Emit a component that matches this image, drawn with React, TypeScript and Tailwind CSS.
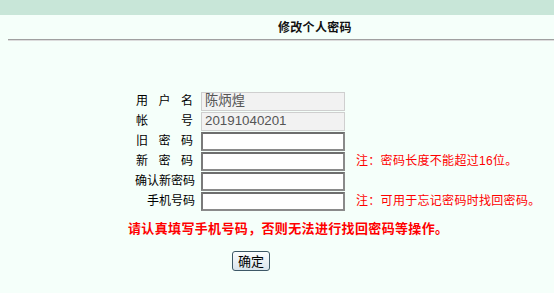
const cjk = "font-['Liberation_Sans','Noto_Sans_CJK_SC',sans-serif]";

const Spaced = ({ chars, w }: { chars: string[]; w: number }) => (
  <span className="inline-flex justify-between mr-[2px]" style={{ width: w }}>
    {chars.map((c, i) => (
      <span key={i}>{c}</span>
    ))}
  </span>
);

const rows: {
  label: React.ReactNode;
  value?: string;
  readOnly?: boolean;
  note?: string;
}[] = [
  { label: <Spaced chars={["用", "户", "名"]} w={57} />, value: "陈炳煌", readOnly: true },
  { label: <Spaced chars={["帐", "号"]} w={57} />, value: "20191040201", readOnly: true },
  { label: <Spaced chars={["旧", "密", "码"]} w={57} /> },
  { label: <Spaced chars={["新", "密", "码"]} w={57} />, note: "注：密码长度不能超过16位。" },
  { label: "确认新密码" },
  { label: "手机号码", note: "注：可用于忘记密码时找回密码。" },
];

export default function App() {
  return (
    <div className={`w-[554px] h-[293px] bg-[#f5fffa] text-black overflow-hidden ${cjk}`}>
      <div className="h-[15px] bg-[#c8e6d8]" />
      <div className="h-[24px] pt-[2px] flex items-center pl-[278px] text-[12px] font-bold text-[#111] tracking-[0.3px]">
        修改个人密码
      </div>
      <div className="ml-[8px] border-t border-t-[#a0a0a0] border-b border-b-[#dcdcdc]" />

      <div className="pt-[50px] pl-[134px]">
        {rows.map((r, i) => (
          <div key={i} className="h-[20px] flex items-center text-[12px]">
            <div className="w-[62px] flex justify-end pr-[1px] leading-none whitespace-nowrap">{r.label}</div>
            <div className="w-[5px]" />
            {r.readOnly ? (
              <input
                readOnly
                value={r.value}
                className="w-[144px] h-[19px] box-border bg-[#f2f2f2] border border-[#cfcfcf] px-[3px] text-[13.33px] text-[#555] outline-none"
              />
            ) : (
              <input className="w-[144px] h-[19px] box-border bg-white border-2 border-t-[#6e6e6e] border-l-[#7a7a7a] border-r-[#8a8a8a] border-b-[#8a8a8a] outline-none" />
            )}
            {r.note && (
              <span className="ml-[11px] text-[12px] text-[#ff0000] whitespace-nowrap tracking-[0.3px]">{r.note}</span>
            )}
          </div>
        ))}
      </div>

      <div className="mt-[9px] pl-[128px] h-[18px] flex items-center text-[13px] font-bold text-[#ff0000] tracking-[0.35px] whitespace-nowrap">
        请认真填写手机号码，否则无法进行找回密码等操作。
      </div>

      <div className="mt-[13px] pl-[232px]">
        <button className="w-[38px] h-[20px] flex items-center justify-center rounded-[3px] border border-[#3d5866] bg-gradient-to-b from-[#fbfdfe] to-[#d9e4ec] text-[13px] leading-none">
          确定
        </button>
      </div>
    </div>
  );
}
